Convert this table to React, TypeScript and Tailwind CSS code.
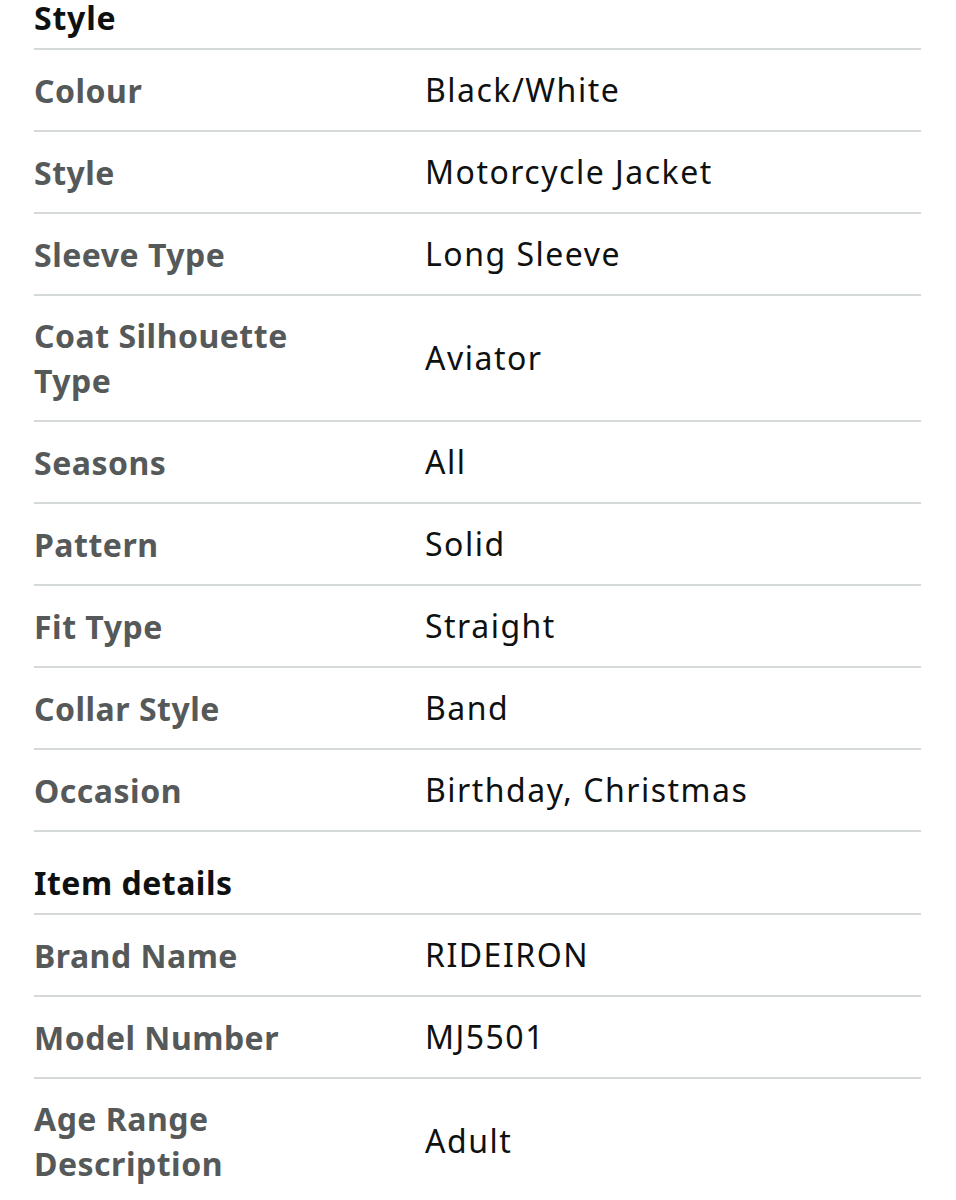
const styleRows: [string, string][] = [
  ['Colour', 'Black/White'],
  ['Style', 'Motorcycle Jacket'],
  ['Sleeve Type', 'Long Sleeve'],
  ['Coat Silhouette Type', 'Aviator'],
  ['Seasons', 'All'],
  ['Pattern', 'Solid'],
  ['Fit Type', 'Straight'],
  ['Collar Style', 'Band'],
  ['Occasion', 'Birthday, Christmas'],
]

const itemRows: [string, string][] = [
  ['Brand Name', 'RIDEIRON'],
  ['Model Number', 'MJ5501'],
  ['Age Range Description', 'Adult'],
]

function Row({ label, value }: { label: string; value: string }) {
  return (
    <div className="flex items-center border-t-2 border-[#d5d9d9] py-[17px]">
      <div className="w-[391px] pr-[60px] font-bold leading-[45px] tracking-[0.5px] text-[#565959]">{label}</div>
      <div className="flex-1 tracking-[1.5px] text-[#0f1111]">{value}</div>
    </div>
  )
}

export default function App() {
  return (
    <div
      className="bg-white min-h-[1200px] pl-[34px] pr-[35px] text-[32px] leading-[46px] overflow-hidden"
      style={{ fontFamily: '"Noto Sans", "Open Sans", sans-serif' }}
    >
      <h2 className="-mt-[5px] pb-[7px] font-bold tracking-[0.8px] text-[#0f1111]">Style</h2>
      {styleRows.map(([l, v]) => (
        <Row key={l} label={l} value={v} />
      ))}
      <h2 className="border-t-2 border-[#d5d9d9] pt-[28px] pb-[7px] font-bold tracking-[0.5px] text-[#0f1111]">Item details</h2>
      {itemRows.map(([l, v]) => (
        <Row key={l} label={l} value={v} />
      ))}
    </div>
  )
}
